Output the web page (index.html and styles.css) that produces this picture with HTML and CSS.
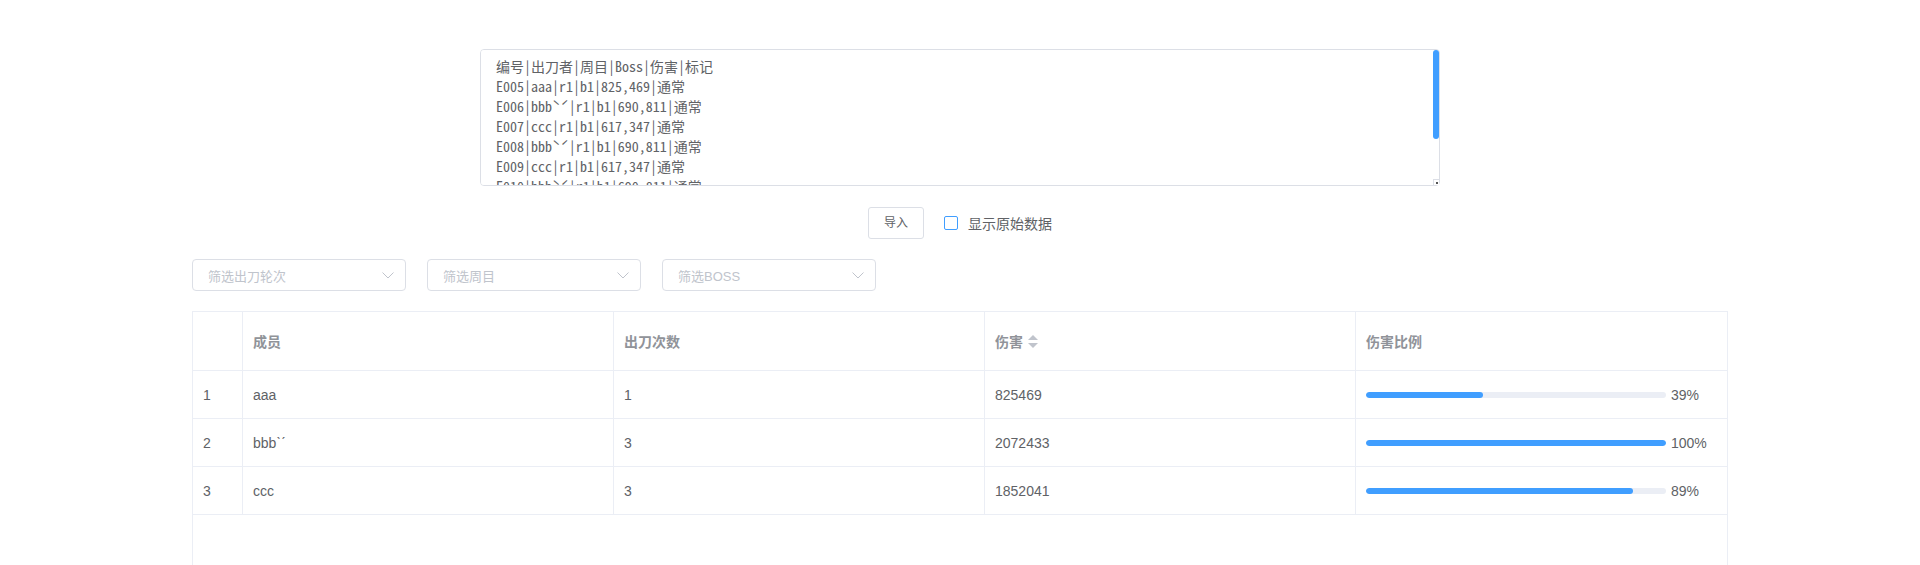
FILE: index.html
```html
<!DOCTYPE html>
<html lang="zh-CN">
<head>
<meta charset="utf-8">
<title>出刀统计</title>
<link rel="stylesheet" href="styles.css">
</head>
<body>
<div class="page">
  <div class="raw-wrap">
    <textarea class="raw" spellcheck="false">编号|出刀者|周目|Boss|伤害|标记
E005|aaa|r1|b1|825,469|通常
E006|bbbˋˊ|r1|b1|690,811|通常
E007|ccc|r1|b1|617,347|通常
E008|bbbˋˊ|r1|b1|690,811|通常
E009|ccc|r1|b1|617,347|通常
E010|bbbˋˊ|r1|b1|690,811|通常
E011|ccc|r1|b1|617,347|通常

</textarea>
    <span class="thumb"></span>
    <span class="resizer"><span class="resizer-dot"></span></span>
  </div>

  <div class="actions">
    <button class="btn" type="button">导入</button>
    <label class="check"><span class="check-box"></span><span class="check-label">显示原始数据</span></label>
  </div>

  <div class="filters">
    <div class="select"><span class="placeholder">筛选出刀轮次</span><svg class="arrow" width="12" height="7" viewBox="0 0 12 7"><path d="M0.5 0.5 L6 6 L11.5 0.5" fill="none" stroke="#c0c4cc" stroke-width="1"/></svg></div>
    <div class="select"><span class="placeholder">筛选周目</span><svg class="arrow" width="12" height="7" viewBox="0 0 12 7"><path d="M0.5 0.5 L6 6 L11.5 0.5" fill="none" stroke="#c0c4cc" stroke-width="1"/></svg></div>
    <div class="select"><span class="placeholder">筛选BOSS</span><svg class="arrow" width="12" height="7" viewBox="0 0 12 7"><path d="M0.5 0.5 L6 6 L11.5 0.5" fill="none" stroke="#c0c4cc" stroke-width="1"/></svg></div>
  </div>

  <div class="table">
    <div class="row head">
      <div class="cell"></div>
      <div class="cell">成员</div>
      <div class="cell">出刀次数</div>
      <div class="cell">伤害<svg class="sort" width="10" height="13" viewBox="0 0 10 13"><path d="M0 5 L5 0 L10 5 Z" fill="#c0c4cc"/><path d="M0 8 L10 8 L5 13 Z" fill="#c0c4cc"/></svg></div>
      <div class="cell">伤害比例</div>
    </div>
    <div class="row">
      <div class="cell">1</div>
      <div class="cell">aaa</div>
      <div class="cell">1</div>
      <div class="cell">825469</div>
      <div class="cell"><div class="progress"><div class="track"><div class="fill" style="width:39%"></div></div><span class="pct">39%</span></div></div>
    </div>
    <div class="row">
      <div class="cell">2</div>
      <div class="cell">bbbˋˊ</div>
      <div class="cell">3</div>
      <div class="cell">2072433</div>
      <div class="cell"><div class="progress"><div class="track"><div class="fill" style="width:100%"></div></div><span class="pct">100%</span></div></div>
    </div>
    <div class="row">
      <div class="cell">3</div>
      <div class="cell">ccc</div>
      <div class="cell">3</div>
      <div class="cell">1852041</div>
      <div class="cell"><div class="progress"><div class="track"><div class="fill" style="width:89%"></div></div><span class="pct">89%</span></div></div>
    </div>
  </div>
</div>
</body>
</html>
```
FILE: styles.css
```css
html, body {
  margin: 0;
  padding: 0;
  background: #fff;
}
body {
  font-family: "Liberation Sans", Arial, "Noto Sans CJK SC", sans-serif;
  font-size: 14px;
  color: #606266;
  overflow: hidden;
}
.page {
  padding-top: 49px;
}
.raw-wrap {
  position: relative;
  width: 960px;
  height: 137px;
  margin: 0 auto;
}
.raw {
  display: block;
  box-sizing: border-box;
  width: 100%;
  height: 100%;
  margin: 0;
  padding: 6px 15px 5px;
  border: 1px solid #dcdfe6;
  border-radius: 4px;
  font-family: "Noto Sans Mono CJK SC", "Liberation Mono", "Noto Sans CJK SC", monospace;
  font-size: 14px;
  line-height: 20px;
  color: #606266;
  resize: none;
  outline: none;
  scrollbar-width: none;
}
.raw::-webkit-scrollbar {
  display: none;
}
.thumb {
  position: absolute;
  top: 1px;
  right: 1px;
  width: 6px;
  height: 89px;
  border-radius: 3px;
  background: #409eff;
}
.resizer {
  position: absolute;
  right: 1px;
  bottom: 1px;
  width: 6px;
  height: 6px;
  box-sizing: border-box;
  border-left: 1px solid #dcdfe6;
  border-top: 1px solid #dcdfe6;
  background: #fff;
}
.resizer-dot {
  position: absolute;
  right: 1px;
  bottom: 1px;
  width: 2px;
  height: 2px;
  background: #555;
}
.actions {
  margin-top: 21px;
  display: flex;
  justify-content: center;
  align-items: center;
  height: 32px;
}
.btn {
  box-sizing: border-box;
  height: 32px;
  padding: 0 15px;
  border: 1px solid #dcdfe6;
  border-radius: 3px;
  background: #fff;
  color: #606266;
  font-family: "Liberation Sans", "Noto Sans CJK SC", sans-serif;
  font-size: 12px;
  line-height: 1;
}
.check {
  margin-left: 20px;
  display: flex;
  align-items: center;
}
.check-box {
  box-sizing: border-box;
  width: 14px;
  height: 14px;
  border: 1px solid #409eff;
  border-radius: 2px;
  background: #fff;
}
.check-label {
  margin-left: 10px;
  font-size: 14px;
  color: #606266;
}
.filters {
  margin: 20px 0 0 192px;
  display: flex;
  gap: 21px;
}
.select {
  box-sizing: border-box;
  width: 214px;
  height: 32px;
  border: 1px solid #dcdfe6;
  border-radius: 4px;
  padding: 0 11px 0 15px;
  display: flex;
  align-items: center;
  justify-content: space-between;
}
.placeholder {
  font-size: 13px;
  color: #c0c4cc;
}
.arrow {
  display: block;
}
.table {
  box-sizing: border-box;
  margin: 20px 192px 0;
  height: 300px;
  border: 1px solid #ebeef5;
}
.row {
  display: grid;
  grid-template-columns: 50px repeat(4, 1fr);
  height: 48px;
  box-sizing: border-box;
  border-bottom: 1px solid #ebeef5;
}
.row.head {
  height: 59px;
  color: #909399;
  font-weight: bold;
}
.cell {
  box-sizing: border-box;
  padding: 0 10px;
  border-right: 1px solid #ebeef5;
  display: flex;
  align-items: center;
  white-space: nowrap;
}
.cell:last-child {
  border-right: none;
}
.sort {
  margin-left: 5px;
  display: block;
}
.progress {
  display: flex;
  align-items: center;
  width: 350px;
}
.track {
  width: 300px;
  height: 6px;
  border-radius: 3px;
  background: #ebeef5;
  overflow: hidden;
}
.fill {
  height: 100%;
  border-radius: 3px;
  background: #409eff;
}
.pct {
  margin-left: 5px;
  font-size: 14px;
  color: #606266;
}
```
